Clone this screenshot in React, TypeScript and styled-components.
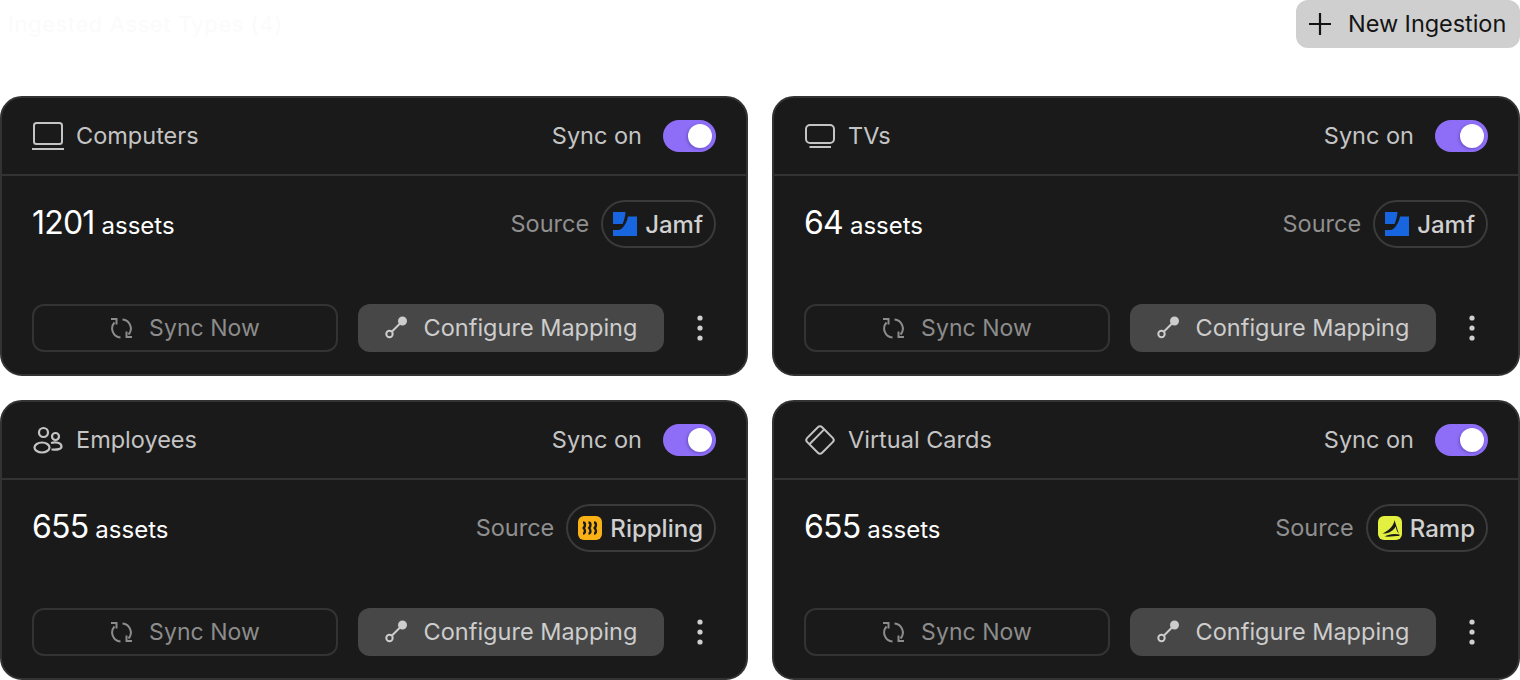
import React from 'react';
import styled, { createGlobalStyle } from 'styled-components';

const GlobalStyle = createGlobalStyle`
  html, body {
    margin: 0;
    padding: 0;
    background: #ffffff;
  }
  * {
    box-sizing: border-box;
  }
`;

const Page = styled.div`
  width: 1520px;
  height: 680px;
  overflow: hidden;
  font-family: 'Inter', 'Liberation Sans', sans-serif;
`;

const TopBar = styled.div`
  display: flex;
  align-items: center;
  justify-content: space-between;
  height: 48px;
  margin-bottom: 48px;
`;

const FaintTitle = styled.div`
  padding-left: 8px;
  font-size: 22px;
  letter-spacing: 0.6px;
  color: #fbfbfb;
`;

// nudges text up a pixel so it sits on the same line as the icon beside it
const LabelText = styled.span`
  margin-bottom: 2px;
`;

const NewButton = styled.button`
  display: flex;
  align-items: center;
  gap: 16px;
  width: 224px;
  height: 48px;
  padding: 0 0 0 12px;
  border: none;
  border-radius: 12px;
  background: #cfcfcf;
  color: #141414;
  font-family: inherit;
  font-size: 23.5px;
  letter-spacing: -0.05px;
`;

const Grid = styled.div`
  display: grid;
  grid-template-columns: 748px 748px;
  grid-auto-rows: 280px;
  gap: 24px;
`;

const Card = styled.section`
  display: flex;
  flex-direction: column;
  border: 2px solid #333333;
  border-radius: 22px;
  background: #1a1a1a;
`;

const CardHeader = styled.header`
  display: flex;
  align-items: center;
  justify-content: space-between;
  height: 78px;
  padding: 0 30px;
  border-bottom: 2px solid #333333;
`;

const TypeLabel = styled.div`
  display: flex;
  align-items: center;
  gap: 12px;
  color: #c4c4c4;
  font-size: 23.5px;
`;

const IconBox = styled.span`
  display: flex;
  width: 32px;
  height: 32px;
  color: #c4c4c4;
`;

const SyncGroup = styled.div`
  display: flex;
  align-items: center;
  gap: 21px;
  color: #c4c4c4;
  font-size: 23.5px;
`;

const Toggle = styled.span`
  display: flex;
  align-items: center;
  justify-content: flex-end;
  width: 53px;
  height: 32px;
  padding-right: 4px;
  border-radius: 16px;
  background: #8e6ef6;
`;

const Knob = styled.span`
  width: 24px;
  height: 24px;
  border-radius: 50%;
  background: #ffffff;
  box-shadow: -1px 1px 3px rgba(40, 20, 110, 0.35);
`;

const InfoRow = styled.div`
  display: flex;
  align-items: center;
  justify-content: space-between;
  height: 96px;
  padding: 0 30px;
  margin-bottom: 32px;
`;

const AssetCount = styled.div`
  display: flex;
  align-items: baseline;
  gap: 7px;
  margin-top: -3px;
  color: #ffffff;
`;

const Count = styled.span`
  font-size: 32px;
  letter-spacing: -0.8px;
`;

const CountUnit = styled.span`
  font-size: 24px;
`;

const SourceGroup = styled.div`
  display: flex;
  align-items: center;
  gap: 12px;
  color: #8f8f8f;
  font-size: 23.5px;
`;

const SourcePill = styled.div`
  display: flex;
  align-items: center;
  gap: 8px;
  height: 48px;
  padding: 0 11px 0 10px;
  border: 2px solid #3a3a3a;
  border-radius: 24px;
  color: #d0d0d0;
  font-size: 24px;
  font-weight: 500;
`;

const Actions = styled.div`
  display: flex;
  align-items: center;
  padding: 0 30px;
  gap: 20px;
`;

const SyncButton = styled.button`
  display: flex;
  align-items: center;
  justify-content: center;
  gap: 15px;
  width: 306px;
  height: 48px;
  border: 2px solid #333333;
  border-radius: 12px;
  background: transparent;
  color: #8c8c8c;
  font-family: inherit;
  font-size: 23px;
  letter-spacing: 0.05px;
`;

const MappingButton = styled.button`
  display: flex;
  align-items: center;
  justify-content: center;
  gap: 15px;
  width: 306px;
  height: 48px;
  border: none;
  border-radius: 12px;
  background: #474747;
  color: #cdcdcd;
  font-family: inherit;
  font-size: 23.5px;
`;

const MoreButton = styled.span`
  display: flex;
  align-items: center;
  justify-content: center;
  width: 32px;
  height: 32px;
  color: #cfcfcf;
`;

const PlusIcon = () => (
  <svg width="24" height="24" viewBox="0 0 24 24" fill="none" stroke="currentColor" strokeWidth="2.2">
    <path d="M12 1V23M1 12H23" />
  </svg>
);

const LaptopIcon = () => (
  <svg width="32" height="32" viewBox="0 0 32 32" fill="none" stroke="currentColor" strokeWidth="2">
    <rect x="2" y="3" width="28" height="21" rx="2.5" />
    <path d="M0 29H32" />
  </svg>
);

const TvIcon = () => (
  <svg width="32" height="32" viewBox="0 0 32 32" fill="none" stroke="currentColor" strokeWidth="2">
    <rect x="2" y="5" width="28" height="18" rx="4" />
    <path d="M5.5 27H27" />
  </svg>
);

const UsersIcon = () => (
  <svg width="32" height="32" viewBox="0 0 32 32" fill="none" stroke="currentColor" strokeWidth="2.2">
    <circle cx="11.5" cy="8.5" r="4.5" />
    <circle cx="23.5" cy="12.5" r="3.5" />
    <ellipse cx="10" cy="23.500" rx="7.5" ry="5" />
    <path d="M19 19c4.500-1.500 10.500-.5 10.500 3.500 0 2.500-3.500 3.500-10 3" />
  </svg>
);

const CardIcon = () => (
  <svg width="32" height="32" viewBox="0 0 32 32" fill="none" stroke="currentColor" strokeWidth="2">
    <g transform="rotate(-45 16 16)">
      <rect x="5.500" y="5.500" width="21" height="21" rx="3" />
      <path d="M5.500 11.500H26.500" />
    </g>
  </svg>
);

const SyncIcon = () => (
  <svg width="24" height="24" viewBox="0 0 24 24" fill="none" stroke="currentColor" strokeWidth="2">
    <path d="M4.500 6.500A9 9 0 0 0 10.500 21.500" />
    <path d="M1 3H6.500V8.500" />
    <path d="M12.500 3.500A9 9 0 0 1 18.500 18.500" />
    <path d="M22 21H16.500V15.500" />
  </svg>
);

const MappingIcon = () => (
  <svg width="24" height="24" viewBox="0 0 24 24" fill="none" stroke="currentColor" strokeWidth="2">
    <circle cx="4.500" cy="18" r="3.200" />
    <circle cx="17.500" cy="5" r="3.500" fill="currentColor" />
    <path d="M7 15.500L15 7.500" />
  </svg>
);

const DotsIcon = () => (
  <svg width="32" height="32" viewBox="0 0 32 32" fill="currentColor">
    <circle cx="16" cy="6" r="2.600" />
    <circle cx="16" cy="16" r="2.600" />
    <circle cx="16" cy="26" r="2.600" />
  </svg>
);

const JamfLogo = () => (
  <svg width="24" height="24" viewBox="0 0 24 24" fill="#1766e0">
    <path d="M0 0H12.500C12 5 11 9 9.500 12H0Z" />
    <path d="M15 4.500H24V24H0V18H5C10 18 14 10 15 4.500Z" />
  </svg>
);

const RipplingLogo = () => (
  <svg width="24" height="24" viewBox="0 0 24 24">
    <rect width="24" height="24" rx="6" fill="#f9b115" />
    <g fill="none" stroke="#1a1a1a" strokeWidth="2.400">
      <path d="M5 6.500c2.500 0 2.500 3.500.7 5.500 1.800 2 1.800 5.500-.7 5.500" />
      <path d="M10.500 6.500c2.500 0 2.500 3.500.7 5.500 1.800 2 1.800 5.500-.7 5.500" />
      <path d="M16 6.500c2.500 0 2.500 3.500.7 5.500 1.800 2 1.800 5.500-.7 5.500" />
    </g>
  </svg>
);

const RampLogo = () => (
  <svg width="24" height="24" viewBox="0 0 24 24">
    <rect width="24" height="24" rx="6" fill="#e4f040" />
    <path
      d="M16.500 4C16 9 11.500 14.500 4.500 17.500C10 18 15.500 15 17.800 10.500C18 13.500 19.500 16.500 21.500 18.500C16 17 10 18.500 6.500 20.500C12 21 17 20 21.500 20Z"
      fill="#1a1a1a"
    />
  </svg>
);

interface AssetType {
  name: string;
  count: string;
  icon: React.ReactNode;
  source: string;
  logo: React.ReactNode;
}

const assetTypes: AssetType[] = [
  { name: 'Computers', count: '1201', icon: <LaptopIcon />, source: 'Jamf', logo: <JamfLogo /> },
  { name: 'TVs', count: '64', icon: <TvIcon />, source: 'Jamf', logo: <JamfLogo /> },
  { name: 'Employees', count: '655', icon: <UsersIcon />, source: 'Rippling', logo: <RipplingLogo /> },
  { name: 'Virtual Cards', count: '655', icon: <CardIcon />, source: 'Ramp', logo: <RampLogo /> },
];

export default function App() {
  return (
    <Page>
      <GlobalStyle />
      <TopBar>
        <FaintTitle>Ingested Asset Types (4)</FaintTitle>
        <NewButton>
          <PlusIcon />
          <LabelText>New Ingestion</LabelText>
        </NewButton>
      </TopBar>
      <Grid>
        {assetTypes.map(item => (
          <Card key={item.name}>
            <CardHeader>
              <TypeLabel>
                <IconBox>{item.icon}</IconBox>
                <LabelText>{item.name}</LabelText>
              </TypeLabel>
              <SyncGroup>
                <LabelText>Sync on</LabelText>
                <Toggle>
                  <Knob />
                </Toggle>
              </SyncGroup>
            </CardHeader>
            <InfoRow>
              <AssetCount>
                <Count>{item.count}</Count>
                <CountUnit>assets</CountUnit>
              </AssetCount>
              <SourceGroup>
                <LabelText>Source</LabelText>
                <SourcePill>
                  {item.logo}
                  {item.source}
                </SourcePill>
              </SourceGroup>
            </InfoRow>
            <Actions>
              <SyncButton>
                <SyncIcon />
                Sync Now
              </SyncButton>
              <MappingButton>
                <MappingIcon />
                <LabelText>Configure Mapping</LabelText>
              </MappingButton>
              <MoreButton>
                <DotsIcon />
              </MoreButton>
            </Actions>
          </Card>
        ))}
      </Grid>
    </Page>
  );
}
